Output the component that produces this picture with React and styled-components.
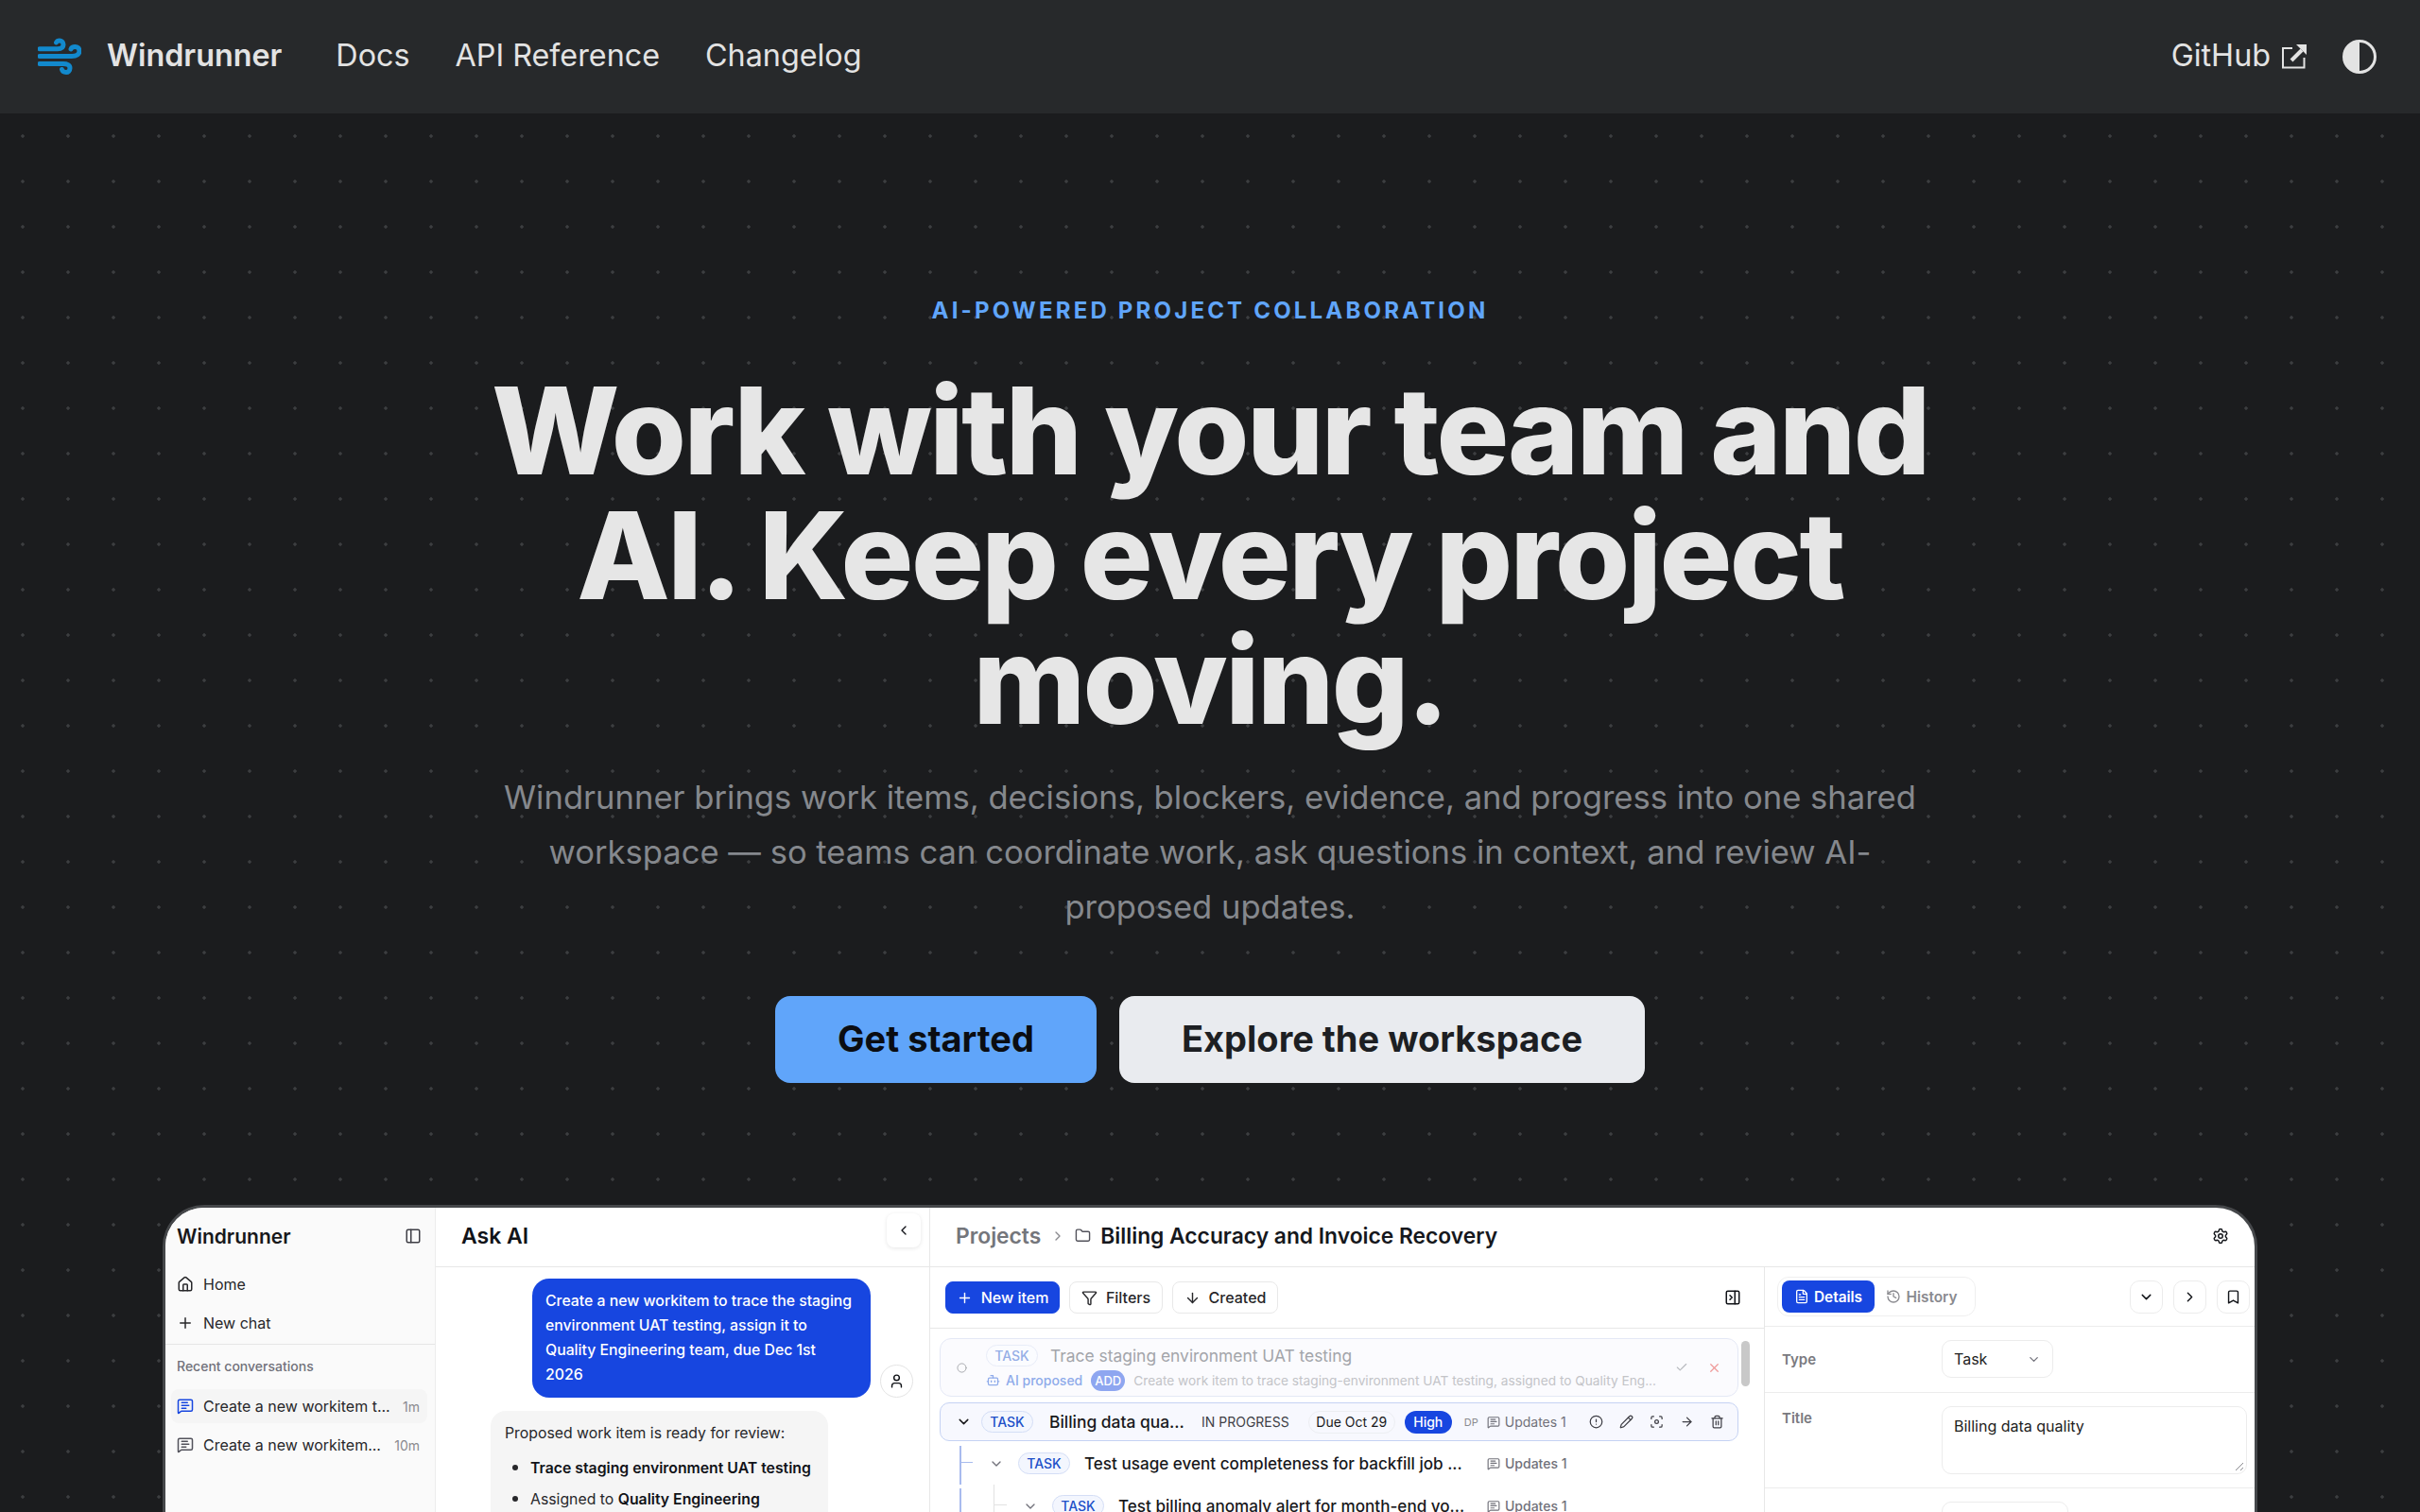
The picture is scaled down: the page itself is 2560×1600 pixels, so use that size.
import React from 'react';
import styled, { createGlobalStyle } from 'styled-components';
import {
  ArrowDown, ArrowRight, Bookmark, Bot, Check, ChevronDown, ChevronLeft, ChevronRight,
  Circle, CircleAlert, FileText, Filter, Focus, Folder, History, House, MessageSquareText,
  Pencil, PanelLeft, PanelRightClose, Plus, Settings, Trash2, User, X,
} from 'lucide-react';

const GlobalStyle = createGlobalStyle`
  * { box-sizing: border-box; }
  html, body { margin: 0; background: #1b1c1e; }
  body { font-family: Inter, "Noto Sans", sans-serif; }
`;

const Page = styled.div`
  height: 1600px;
  overflow: hidden;
  display: flex;
  flex-direction: column;
`;

const Nav = styled.nav`
  height: 120px;
  flex: none;
  background: #27292b;
  display: flex;
  align-items: center;
  padding: 0 46px 0 40px;
  color: #e3e3e3;
  font-size: 32.3px;
`;

const Brand = styled.a`
  display: flex;
  align-items: center;
  gap: 27px;
  font-weight: 600;
  margin-right: 57px;
`;

const NavText = styled.span`
  padding-bottom: 3px;
`;

const NavLink = styled(NavText)`
  margin-right: 48px;
  font-weight: 400;
`;

const NavRight = styled.div`
  margin-left: auto;
  display: flex;
  align-items: center;
  gap: 38px;
`;

const GitHubLink = styled.a`
  display: flex;
  align-items: center;
  gap: 12px;
`;

const Main = styled.main`
  flex: 1;
  min-height: 0;
  background-color: #1b1c1e;
  background-image: radial-gradient(circle at center, #3c3e40 0, #3c3e40 1.4px, transparent 2px);
  background-size: 48px 48px;
  display: flex;
  flex-direction: column;
  align-items: center;
  padding-top: 194px;
`;

const Eyebrow = styled.div`
  font-size: 24px;
  line-height: 30px;
  font-weight: 700;
  letter-spacing: 0.133em;
  color: #60a5fa;
`;

const Headline = styled.h1`
  margin: 46px 0 0;
  width: 1680px;
  text-align: center;
  font-size: 128px;
  line-height: 132px;
  font-weight: 800;
  letter-spacing: -0.02em;
  color: #e6e6e6;
`;

const Lead = styled.p`
  margin: 28px 0 0;
  width: 1520px;
  text-align: center;
  font-size: 34.6px;
  line-height: 58px;
  font-weight: 400;
  color: #85888d;
`;

const Actions = styled.div`
  display: flex;
  gap: 24px;
  margin-top: 66px;
`;

const CtaButton = styled.a`
  height: 92px;
  width: ${(p) => p.$width}px;
  padding-bottom: 2px;
  display: flex;
  align-items: center;
  justify-content: center;
  border-radius: 16px;
  font-size: 38px;
  font-weight: 700;
  background: ${(p) => (p.$primary ? '#60a5fa' : '#e9ebef')};
  color: ${(p) => (p.$primary ? '#0b0d12' : '#1d1f23')};
`;

const Preview = styled.div`
  margin-top: 129px;
  width: 2216px;
  height: 500px;
  flex: none;
  background: #fff;
  border: 3px solid #45474a;
  border-bottom: 0;
  border-radius: 44px 44px 0 0;
  overflow: hidden;
  display: grid;
  grid-template-columns: 286px 523px 1fr;
  color: #111318;
`;

const Sidebar = styled.aside`
  background: #fafafa;
  border-right: 1px solid #ececec;
  padding: 0 8px 0 6px;
`;

const SideHeader = styled.div`
  height: 60px;
  padding: 0 6px;
  display: flex;
  align-items: center;
  justify-content: space-between;
  font-size: 21px;
  font-weight: 600;
  color: #18181b;
`;

const SideItem = styled.div`
  height: 41px;
  padding: 0 6px;
  display: flex;
  align-items: center;
  gap: 10px;
  font-size: 16px;
  color: #27272a;
`;

const SideRule = styled.div`
  height: 1px;
  background: #e6e6e6;
  margin: 2px -8px 0 -6px;
`;

const SideLabel = styled.div`
  padding: 14px 6px 0;
  height: 47px;
  font-size: 14px;
  font-weight: 500;
  color: #71717a;
`;

const Conversation = styled.div`
  height: 36px;
  margin-bottom: 5px;
  border-radius: 8px;
  padding: 0 8px 0 6px;
  display: flex;
  align-items: center;
  gap: 10px;
  font-size: 16px;
  color: #27272a;
  background: ${(p) => (p.$active ? '#f5f5f5' : 'transparent')};
`;

const ConversationTitle = styled.span`
  flex: 1;
  min-width: 0;
  overflow: hidden;
  white-space: nowrap;
`;

const Age = styled.span`
  font-size: 14px;
  color: #8a8a8f;
`;

const PanelHead = styled.div`
  height: 63px;
  padding-bottom: 3px;
  border-bottom: 1px solid #e7e7e7;
  display: flex;
  align-items: center;
  position: relative;
  font-size: 23px;
  font-weight: 600;
`;

const AskPanel = styled.section`
  border-right: 1px solid #e7e7e7;
  min-width: 0;
`;

const AskHead = styled(PanelHead)`
  padding-left: 27px;
`;

const CollapseTab = styled.div`
  position: absolute;
  top: 6px;
  right: 9px;
  width: 36px;
  height: 36px;
  border-radius: 8px;
  background: #fff;
  box-shadow: 0 1px 4px rgba(0, 0, 0, 0.1);
  display: flex;
  align-items: center;
  justify-content: center;
`;

const Chat = styled.div`
  padding: 12px 0 0 58px;
`;

const UserRow = styled.div`
  display: flex;
  align-items: flex-end;
  padding-left: 44px;
  gap: 10px;
`;

const UserBubble = styled.div`
  width: 358px;
  padding: 11px 16px 11px 14px;
  border-radius: 18px;
  background: #1746e0;
  color: #fff;
  font-size: 15.8px;
  line-height: 26px;
  font-weight: 500;
`;

const Avatar = styled.div`
  width: 35px;
  height: 35px;
  border-radius: 50%;
  border: 1px solid #e4e4e4;
  display: flex;
  align-items: center;
  justify-content: center;
  background: #fff;
`;

const BotBubble = styled.div`
  margin-top: 14px;
  width: 357px;
  height: 190px;
  padding: 12px 15px;
  border-radius: 16px;
  background: #f5f5f5;
  font-size: 15.8px;
  line-height: 24px;
  color: #27272a;
  ul {
    margin: 11px 0 0;
    padding-left: 27px;
  }
  li {
    margin-bottom: 7px;
  }
  li::marker {
    font-size: 20px;
  }
  b {
    font-weight: 600;
    color: #111318;
  }
`;

const ProjectPanel = styled.section`
  min-width: 0;
  display: flex;
  flex-direction: column;
`;

const ProjectHead = styled(PanelHead)`
  padding-left: 27px;
  padding-right: 27px;
  gap: 10px;
  font-size: 22.8px;
  color: #16181d;
  justify-content: flex-start;
`;

const Crumb = styled.span`
  color: #74767b;
`;

const GearSlot = styled.div`
  margin-left: auto;
  display: flex;
`;

const Split = styled.div`
  display: grid;
  grid-template-columns: 883px 1fr;
  min-height: 0;
  flex: 1;
`;

const ListPane = styled.div`
  border-right: 1px solid #e7e7e7;
  min-width: 0;
`;

const Toolbar = styled.div`
  height: 65px;
  border-bottom: 1px solid #e7e7e7;
  display: flex;
  align-items: center;
  gap: 10px;
  padding: 0 24px 0 16px;
`;

const ToolButton = styled.div`
  height: 34px;
  width: ${(p) => p.$width}px;
  border-radius: 8px;
  border: 1px solid ${(p) => (p.$primary ? '#1746e0' : '#e8e8e8')};
  background: ${(p) => (p.$primary ? '#1746e0' : '#fff')};
  color: ${(p) => (p.$primary ? '#fff' : '#27272a')};
  display: flex;
  align-items: center;
  justify-content: center;
  gap: 9px;
  font-size: 16px;
  font-weight: 500;
`;

const ToolEnd = styled.div`
  margin-left: auto;
  display: flex;
`;

const ListBody = styled.div`
  padding: 10px 13px 0 10px;
  position: relative;
`;

const Scrollbar = styled.div`
  position: absolute;
  top: 13px;
  right: 15px;
  width: 9px;
  height: 48px;
  border-radius: 5px;
  background: #c8c8c8;
`;

const ProposedRow = styled.div`
  width: 845px;
  height: 62px;
  border: 1px solid #e4e8f5;
  border-radius: 12px;
  background: #fbfbfe;
  display: flex;
  align-items: center;
  padding: 0 17px 0 17px;
  gap: 20px;
  color: #a3a5aa;
`;

const ProposedBody = styled.div`
  flex: 1;
  min-width: 0;
  display: flex;
  flex-direction: column;
  gap: 4px;
`;

const ProposedLine = styled.div`
  display: flex;
  align-items: center;
  gap: 9px;
  font-size: ${(p) => p.$size}px;
  white-space: nowrap;
`;

const ProposedTitle = styled.span`
  margin-left: 4px;
  font-size: 17.4px;
`;

const ProposedNote = styled.span`
  flex: none;
  font-size: 13.7px;
  color: #c3c4c8;
`;

const Tag = styled.span`
  flex: none;
  height: 23px;
  width: 55px;
  border-radius: 12px;
  border: 1px solid ${(p) => (p.$faded ? '#e8ecf8' : '#d4def6')};
  background: ${(p) => (p.$faded ? '#fbfcff' : '#f3f6fe')};
  color: ${(p) => (p.$faded ? '#95aee6' : '#2050c8')};
  font-size: 14px;
  font-weight: 500;
  display: flex;
  align-items: center;
  justify-content: center;
  margin: ${(p) => p.$margin || '0'};
`;

const AddBadge = styled.span`
  height: 22px;
  width: 38px;
  border-radius: 11px;
  background: #8ea6f0;
  color: #fff;
  font-size: 13px;
  font-weight: 500;
  display: flex;
  align-items: center;
  justify-content: center;
`;

const AiLabel = styled.span`
  display: flex;
  align-items: center;
  gap: 6px;
  color: #8fabea;
  font-size: 14px;
  font-weight: 500;
`;

const TaskRow = styled.div`
  margin: 6px 0 1px;
  width: 845px;
  height: 41px;
  border: 1px solid #c5d2f3;
  border-radius: 10px;
  background: #f7f8fe;
  display: flex;
  align-items: center;
  padding: 0 14px 0 16px;
  font-size: 16px;
  color: #18181b;
`;

const TaskTitle = styled.span`
  width: ${(p) => p.$width}px;
  flex: none;
  margin-left: 17px;
  font-size: 17.4px;
  font-weight: 500;
  white-space: nowrap;
`;

const Status = styled.span`
  font-size: 14px;
  margin-left: 22px;
  color: #3f3f46;
`;

const Pill = styled.span`
  margin-left: 20px;
  height: 24px;
  width: 92px;
  border-radius: 12px;
  border: 1px solid #eceef2;
  font-size: 14px;
  display: flex;
  align-items: center;
  justify-content: center;
`;

const Priority = styled.span`
  margin-left: 10px;
  height: 24px;
  width: 50px;
  border-radius: 12px;
  background: #1746e0;
  color: #fff;
  font-size: 14px;
  font-weight: 500;
  display: flex;
  align-items: center;
  justify-content: center;
`;

const Initials = styled.span`
  font-size: 11px;
  color: #8a8a8f;
  margin-left: 13px;
  width: 24px;
`;

const Updates = styled.span`
  display: flex;
  align-items: center;
  gap: 5px;
  font-size: 14px;
  color: #71717a;
  white-space: nowrap;
`;

const RowTools = styled.div`
  margin-left: auto;
  display: flex;
  align-items: center;
  gap: 17px;
  color: #3f3f46;
`;

const Tree = styled.div`
  position: relative;
  padding-left: ${(p) => p.$indent}px;
  height: 45px;
  display: flex;
  align-items: center;
  font-size: 17.1px;
  font-weight: 500;
  color: #18181b;
  white-space: nowrap;
  &::before {
    content: '';
    position: absolute;
    left: 21px;
    top: 4px;
    bottom: 0;
    border-left: 2px solid #a8bbee;
  }
`;

const TreeTick = styled.span`
  position: absolute;
  left: ${(p) => p.$left}px;
  top: 21px;
  width: 14px;
  border-top: 1px solid ${(p) => p.$color};
`;

const TreeSpine = styled.span`
  position: absolute;
  left: ${(p) => p.$left}px;
  top: 0;
  bottom: 0;
  border-left: 1px solid #e2e2e2;
`;

const TreeUpdates = styled(Updates)`
  position: absolute;
  left: 579px;
`;

const DetailPane = styled.div`
  min-width: 0;
`;

const DetailBar = styled.div`
  height: 63px;
  border-bottom: 1px solid #ececec;
  display: flex;
  align-items: center;
  padding: 0 5px 0 13px;
`;

const Tabs = styled.div`
  height: 42px;
  width: 210px;
  padding: 3px 4px;
  border: 1px solid #efefef;
  border-radius: 12px;
  display: flex;
  align-items: center;
`;

const Tab = styled.div`
  height: 34px;
  width: ${(p) => p.$width}px;
  border-radius: 8px;
  background: ${(p) => (p.$active ? '#1746e0' : 'transparent')};
  color: ${(p) => (p.$active ? '#fff' : '#8a8a8f')};
  display: flex;
  align-items: center;
  justify-content: center;
  gap: 5px;
  font-size: 15.4px;
  font-weight: 600;
`;

const IconButtons = styled.div`
  margin-left: auto;
  display: flex;
  gap: 11px;
`;

const IconButton = styled.div`
  width: 35px;
  height: 35px;
  border: 1px solid #ececec;
  border-radius: 10px;
  display: flex;
  align-items: center;
  justify-content: center;
`;

const Field = styled.div`
  display: grid;
  grid-template-columns: 169px 1fr;
  align-items: ${(p) => (p.$top ? 'start' : 'center')};
  padding: 14px 8px ${(p) => (p.$top ? '14px' : '15px')} 18px;
  border-bottom: 1px solid #ececec;
`;

const FieldLabel = styled.div`
  font-size: 15px;
  font-weight: 600;
  color: #7a7a7f;
  padding-top: ${(p) => (p.$top ? '3px' : '0')};
`;

const Select = styled.div`
  height: 40px;
  width: ${(p) => p.$width}px;
  border: 1px solid #ececec;
  border-radius: 10px;
  padding: 0 12px;
  display: flex;
  align-items: center;
  justify-content: space-between;
  font-size: 16px;
  color: #222;
`;

const TextArea = styled.div`
  position: relative;
  height: 72px;
  border: 1px solid #ececec;
  border-radius: 10px;
  padding: 10px 12px;
  font-size: 16px;
  color: #222;
`;

const ResizeHandle = styled.svg`
  position: absolute;
  right: 2px;
  bottom: 2px;
`;

const BrandMark = () => (
  <svg width="46" height="40" viewBox="0 0 46 40" fill="none" stroke="#1289cd" strokeWidth="5" strokeLinecap="round">
    <path d="M2 11.7H21C25 11.7 27 10 27 7C27 4.5 25 3 23 3C21 3 20 4 19.5 5" />
    <path d="M2 19.5H36C41 19.5 44 17 44 14C44 11 42 9.5 39.5 9.5C37 9.5 35.5 10.5 35 12" />
    <path d="M2 27.5H27C31 27.5 34 29 34 32C34 35 32 36.5 30 36.5C28 36.5 26 35.5 25.5 33.5" />
  </svg>
);

const OpenIcon = () => (
  <svg width="26" height="26" viewBox="0 0 26 26" fill="none" stroke="#e3e3e3">
    <path d="M11 4H1v20.5h22.5V14" strokeWidth="2" />
    <path d="M10 17 21 6" strokeWidth="4" />
    <path d="M15 0h11v11z" fill="#e3e3e3" strokeWidth="0" />
  </svg>
);

const ThemeIcon = () => (
  <svg width="36" height="36" viewBox="0 0 36 36">
    <circle cx="18" cy="18" r="16.5" fill="none" stroke="#e3e3e3" strokeWidth="3" />
    <path d="M18 2a16 16 0 0 0 0 32z" fill="#e3e3e3" />
  </svg>
);

export default function App() {
  return (
    <Page>
      <GlobalStyle />
      <Nav>
        <Brand><BrandMark /><NavText>Windrunner</NavText></Brand>
        <NavLink>Docs</NavLink>
        <NavLink>API Reference</NavLink>
        <NavLink>Changelog</NavLink>
        <NavRight>
          <GitHubLink><NavText>GitHub</NavText><OpenIcon /></GitHubLink>
          <ThemeIcon />
        </NavRight>
      </Nav>
      <Main>
        <Eyebrow>AI-POWERED PROJECT COLLABORATION</Eyebrow>
        <Headline>Work with your team and AI. Keep every project moving.</Headline>
        <Lead>
          Windrunner brings work items, decisions, blockers, evidence, and progress into one shared workspace — so
          teams can coordinate work, ask questions in context, and review AI-proposed updates.
        </Lead>
        <Actions>
          <CtaButton $primary $width={340}>Get started</CtaButton>
          <CtaButton $width={556}>Explore the workspace</CtaButton>
        </Actions>
        <Preview>
          <Sidebar>
            <SideHeader>Windrunner <PanelLeft size={18} color="#3f3f46" /></SideHeader>
            <SideItem><House size={18} />Home</SideItem>
            <SideItem><Plus size={18} />New chat</SideItem>
            <SideRule />
            <SideLabel>Recent conversations</SideLabel>
            <Conversation $active>
              <MessageSquareText size={18} color="#1746e0" />
              <ConversationTitle>Create a new workitem t...</ConversationTitle>
              <Age>1m</Age>
            </Conversation>
            <Conversation>
              <MessageSquareText size={18} color="#52525b" />
              <ConversationTitle>Create a new workitem...</ConversationTitle>
              <Age>10m</Age>
            </Conversation>
          </Sidebar>
          <AskPanel>
            <AskHead>Ask AI<CollapseTab><ChevronLeft size={16} /></CollapseTab></AskHead>
            <Chat>
              <UserRow>
                <UserBubble>
                  Create a new workitem to trace the staging environment UAT testing, assign it to Quality Engineering
                  team, due Dec 1st 2026
                </UserBubble>
                <Avatar><User size={17} /></Avatar>
              </UserRow>
              <BotBubble>
                Proposed work item is ready for review:
                <ul>
                  <li><b>Trace staging environment UAT testing</b></li>
                  <li>Assigned to <b>Quality Engineering</b></li>
                </ul>
              </BotBubble>
            </Chat>
          </AskPanel>
          <ProjectPanel>
            <ProjectHead>
              <Crumb>Projects</Crumb>
              <ChevronRight size={16} color="#8a8a8f" />
              <Folder size={17} color="#52525b" />
              <span>Billing Accuracy and Invoice Recovery</span>
              <GearSlot><Settings size={18} /></GearSlot>
            </ProjectHead>
            <Split>
              <ListPane>
                <Toolbar>
                  <ToolButton $primary $width={121}><Plus size={17} />New item</ToolButton>
                  <ToolButton $width={99}><Filter size={17} />Filters</ToolButton>
                  <ToolButton $width={112}><ArrowDown size={17} />Created</ToolButton>
                  <ToolEnd><PanelRightClose size={18} /></ToolEnd>
                </Toolbar>
                <ListBody>
                  <Scrollbar />
                  <ProposedRow>
                    <Circle size={11} />
                    <ProposedBody>
                      <ProposedLine $size={17}>
                        <Tag $faded>TASK</Tag>
                        <ProposedTitle>Trace staging environment UAT testing</ProposedTitle>
                      </ProposedLine>
                      <ProposedLine $size={14}>
                        <AiLabel><Bot size={15} />AI proposed</AiLabel>
                        <AddBadge>ADD</AddBadge>
                        <ProposedNote>Create work item to trace staging-environment UAT testing, assigned to Quality Eng...</ProposedNote>
                      </ProposedLine>
                    </ProposedBody>
                    <Check size={14} color="#b9bbc0" />
                    <X size={15} color="#ef9a9a" />
                  </ProposedRow>
                  <TaskRow>
                    <ChevronDown size={17} />
                    <Tag $margin="0 0 0 10px">TASK</Tag>
                    <TaskTitle $width={139}>Billing data qua...</TaskTitle>
                    <Status>IN PROGRESS</Status>
                    <Pill>Due Oct 29</Pill>
                    <Priority>High</Priority>
                    <Initials>DP</Initials>
                    <Updates><MessageSquareText size={14} />Updates 1</Updates>
                    <RowTools>
                      <CircleAlert size={15} />
                      <Pencil size={15} />
                      <Focus size={15} />
                      <ArrowRight size={15} />
                      <Trash2 size={15} />
                    </RowTools>
                  </TaskRow>
                  <Tree $indent={52}>
                    <TreeTick $left={21} $color="#a8bbee" />
                    <ChevronDown size={16} color="#71717a" />
                    <Tag $margin="0 15px">TASK</Tag>
                    <span>Test usage event completeness for backfill job ...</span>
                    <TreeUpdates><MessageSquareText size={14} />Updates 1</TreeUpdates>
                  </Tree>
                  <Tree $indent={88}>
                    <TreeSpine $left={57} />
                    <TreeTick $left={57} $color="#e2e2e2" />
                    <ChevronDown size={16} color="#71717a" />
                    <Tag $margin="0 15px">TASK</Tag>
                    <span>Test billing anomaly alert for month-end vo...</span>
                    <TreeUpdates><MessageSquareText size={14} />Updates 1</TreeUpdates>
                  </Tree>
                </ListBody>
              </ListPane>
              <DetailPane>
                <DetailBar>
                  <Tabs>
                    <Tab $active $width={98}><FileText size={16} />Details</Tab>
                    <Tab $width={100}><History size={16} />History</Tab>
                  </Tabs>
                  <IconButtons>
                    <IconButton><ChevronDown size={17} /></IconButton>
                    <IconButton><ChevronRight size={17} /></IconButton>
                    <IconButton><Bookmark size={17} /></IconButton>
                  </IconButtons>
                </DetailBar>
                <Field>
                  <FieldLabel>Type</FieldLabel>
                  <Select $width={118}>Task<ChevronDown size={15} color="#71717a" /></Select>
                </Field>
                <Field $top>
                  <FieldLabel $top>Title</FieldLabel>
                  <TextArea>
                    Billing data quality
                    <ResizeHandle width="10" height="10" viewBox="0 0 10 10" stroke="#8a8a8f" fill="none">
                      <path d="M1 9 9 1M6 9 9 6" />
                    </ResizeHandle>
                  </TextArea>
                </Field>
                <Field>
                  <FieldLabel />
                  <Select $width={134} />
                </Field>
              </DetailPane>
            </Split>
          </ProjectPanel>
        </Preview>
      </Main>
    </Page>
  );
}
